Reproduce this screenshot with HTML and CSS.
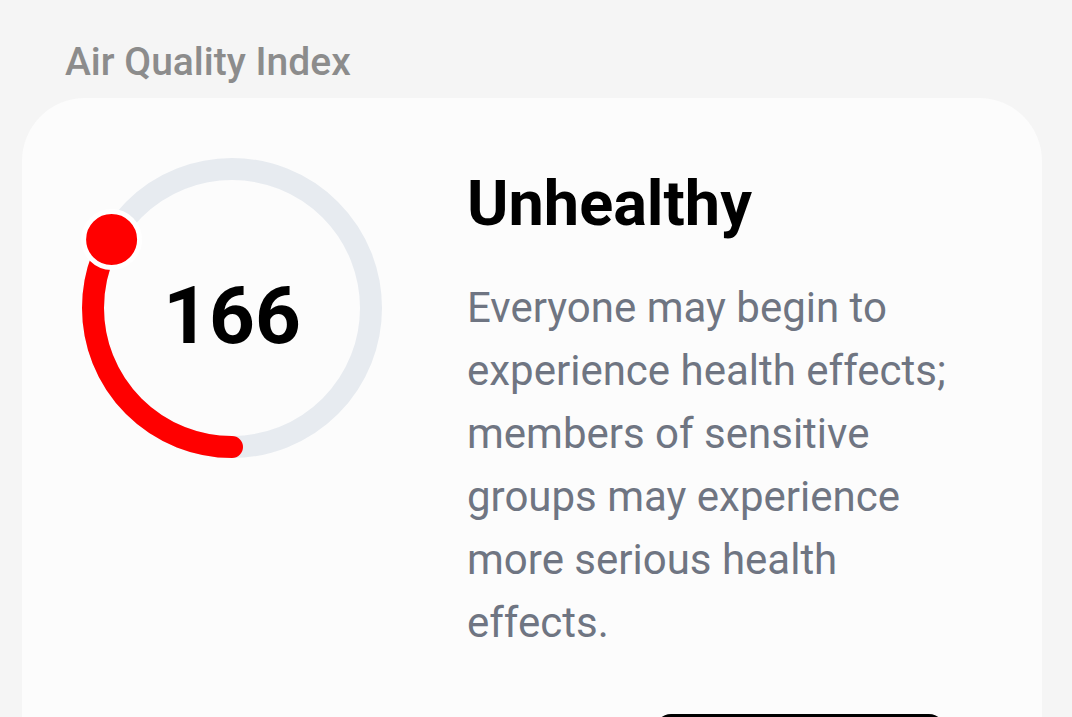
FILE: index.html
```html
<!DOCTYPE html>
<html lang="en">
<head>
    <meta charset="UTF-8">
    <meta name="viewport" content="width=device-width, initial-scale=1.0">
    <title>Air Quality Index</title>
    <link rel="stylesheet" href="styles.css">
</head>
<body>
    <div class="screen">
        <h2 class="section-title">Air Quality Index</h2>

        <div class="card">
            <div class="aqi-row">
                <div class="gauge">
                    <svg class="gauge-svg" width="300" height="300" viewBox="0 0 300 300">
                        <circle class="gauge-track" cx="150" cy="150" r="139"></circle>
                        <circle class="gauge-value" cx="150" cy="150" r="139"
                                stroke-dasharray="290 874" transform="rotate(90 150 150)"></circle>
                        <circle class="gauge-dot" cx="29.6" cy="81.5" r="28"></circle>
                    </svg>
                    <div class="gauge-number">166</div>
                </div>

                <div class="aqi-info">
                    <h1 class="aqi-level">Unhealthy</h1>
                    <p class="aqi-desc">Everyone may begin to experience health effects; members of sensitive groups may experience more serious health effects.</p>
                    <button class="details-button" aria-label="View details"></button>
                </div>
            </div>
        </div>
    </div>
</body>
</html>
```

FILE: styles.css
```css
html, body {
    margin: 0;
    padding: 0;
}
body {
    font-family: Roboto, "Noto Sans", Arial, sans-serif;
    background-color: #f5f5f5;
    overflow: hidden;
}
.screen {
    padding: 39px 30px 0 22px;
}
.section-title {
    margin: 0 0 12px 43px;
    font-size: 39px;
    line-height: 1.2;
    font-weight: 500;
    color: #8c8c8c;
}
.card {
    background-color: #fcfcfc;
    border-radius: 63px 63px 0 0;
    padding: 60px 60px 0 60px;
    min-height: 700px;
}
.aqi-row {
    display: flex;
    align-items: flex-start;
}
.gauge {
    position: relative;
    width: 300px;
    height: 300px;
    flex-shrink: 0;
}
.gauge-svg {
    display: block;
    overflow: visible;
}
.gauge-track {
    fill: none;
    stroke: #e7ebf0;
    stroke-width: 22;
}
.gauge-value {
    fill: none;
    stroke: #ff0000;
    stroke-width: 22;
    stroke-linecap: round;
}
.gauge-dot {
    fill: #ff0000;
    stroke: #ffffff;
    stroke-width: 5;
}
.gauge-number {
    position: absolute;
    inset: 0;
    display: flex;
    align-items: center;
    justify-content: center;
    font-size: 80px;
    font-weight: 700;
    color: #000000;
    padding-top: 16px;
}
.aqi-info {
    margin-left: 85px;
    flex: 1;
}
.aqi-level {
    margin: 8px 0 0 0;
    font-size: 63px;
    line-height: 1.2;
    font-weight: 700;
    color: #000000;
}
.aqi-desc {
    margin: 35px 0 0 0;
    font-size: 42px;
    line-height: 63px;
    color: #6f7582;
}
.details-button {
    display: block;
    margin: 60px 0 0 188px;
    width: 290px;
    height: 110px;
    border: none;
    border-radius: 16px;
    background-color: #000000;
}
```
